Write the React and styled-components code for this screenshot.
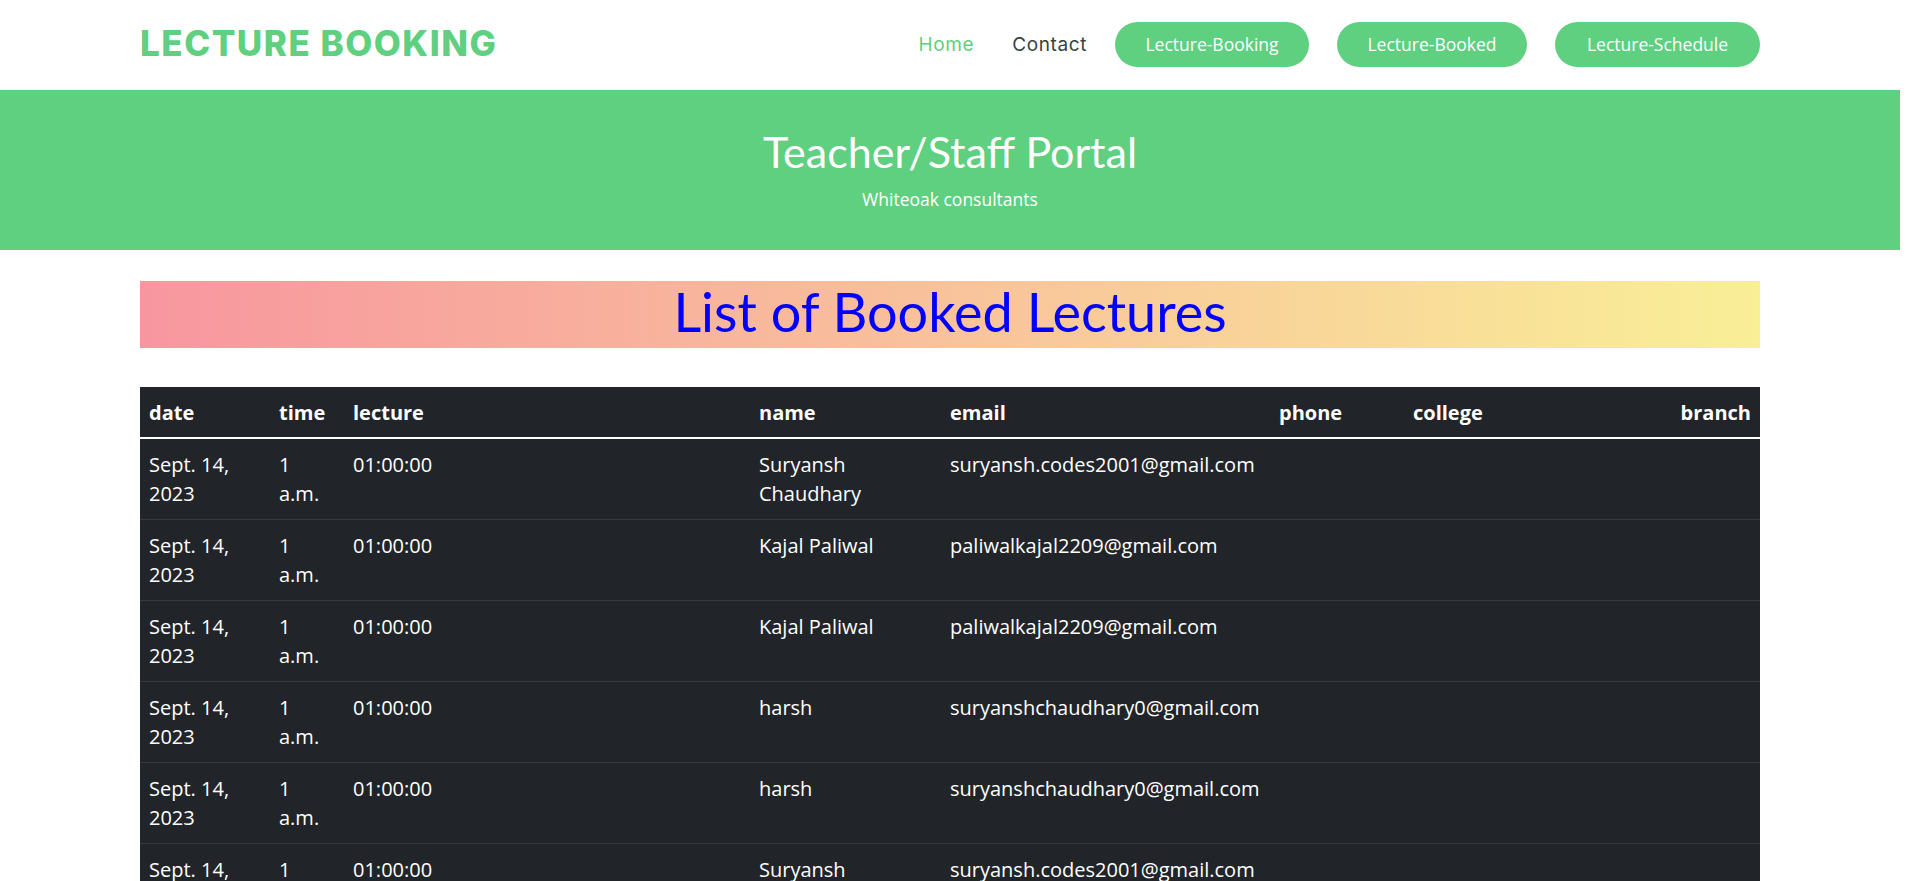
import React from 'react';
import styled, { createGlobalStyle } from 'styled-components';

const GlobalStyle = createGlobalStyle`
  body {
    margin: 0 17px 0 0;
    font-family: 'Open Sans', sans-serif;
    background: #fff;
    color: #212529;
  }
  * { box-sizing: border-box; }
`;

const Header = styled.header`
  height: 90px;
  background: #fff;
`;

const Container = styled.div`
  max-width: 1620px;
  margin: 0 auto;
  height: 100%;
`;

const HeaderInner = styled(Container)`
  display: flex;
  align-items: center;
  justify-content: space-between;
`;

const Logo = styled.div`
  font-family: 'Inter', sans-serif;
  font-weight: 800;
  font-size: 35px;
  letter-spacing: 1.5px;
  color: #5fcf80;
  text-transform: uppercase;
  padding-bottom: 4px;
`;

const Nav = styled.nav`
  display: flex;
  align-items: center;
  gap: 28px;
`;

const NavLink = styled.a`
  font-family: 'Inter', sans-serif;
  font-size: 19px;
  letter-spacing: 0.6px;
  color: ${(p) => (p.$active ? '#5fcf80' : '#37423b')};
  text-decoration: none;
  margin-right: ${(p) => (p.$gap ? '10px' : '0')};
  padding-bottom: 2px;
`;

const NavButton = styled.a`
  display: inline-flex;
  align-items: center;
  justify-content: center;
  height: 45px;
  width: ${(p) => p.$w}px;
  border-radius: 50px;
  background: #5fcf80;
  color: #fff;
  font-family: 'Open Sans', sans-serif;
  font-size: 17.5px;
  text-decoration: none;
  margin-bottom: 2px;
`;

const Hero = styled.section`
  background: #5fcf80;
  height: 160px;
  display: flex;
  flex-direction: column;
  align-items: center;
  color: #fff;
`;

const HeroTitle = styled.h2`
  margin: 38px 0 0;
  font-family: 'Lato', sans-serif;
  font-weight: 400;
  font-size: 43px;
  line-height: 48px;
`;

const HeroSub = styled.p`
  margin: 11px 0 0;
  font-size: 17.5px;
  line-height: 24px;
`;

const Main = styled(Container)`
  padding-top: 31px;
  padding-bottom: 60px;
`;

const Banner = styled.h1`
  margin: 0;
  height: 67px;
  display: flex;
  align-items: center;
  justify-content: center;
  background: linear-gradient(to right, #f8969f, #f9ef97);
  color: #0000ff;
  font-family: 'Lato', sans-serif;
  font-weight: 400;
  font-size: 54px;
  padding-bottom: 6px;
`;

const Table = styled.table`
  margin-top: 39px;
  width: 100%;
  border-collapse: collapse;
  table-layout: fixed;
  background: #212529;
  color: #fff;
  font-size: 20px;
  line-height: 29px;
`;

const Th = styled.th`
  width: ${(p) => (p.$w ? `${p.$w}px` : 'auto')};
  text-align: ${(p) => (p.$right ? 'right' : 'left')};
  padding: 11px 9px 10px;
  font-weight: 700;
  border-bottom: 2px solid #fff;
`;

const Td = styled.td`
  vertical-align: top;
  padding: 11px ${(p) => (p.$pr ? `${p.$pr}px` : '9px')} 11px 9px;
  border-bottom: 1px solid #373b3e;
  font-weight: 400;
`;

const columns = [
  { label: 'date', w: 130 },
  { label: 'time', w: 74 },
  { label: 'lecture', w: 406 },
  { label: 'name', w: 191 },
  { label: 'email', w: 329 },
  { label: 'phone', w: 134 },
  { label: 'college', w: 220 },
  { label: 'branch', right: true },
];

const bookings = [
  { name: 'Suryansh Chaudhary', email: 'suryansh.codes2001@gmail.com' },
  { name: 'Kajal Paliwal', email: 'paliwalkajal2209@gmail.com' },
  { name: 'Kajal Paliwal', email: 'paliwalkajal2209@gmail.com' },
  { name: 'harsh', email: 'suryanshchaudhary0@gmail.com' },
  { name: 'harsh', email: 'suryanshchaudhary0@gmail.com' },
  { name: 'Suryansh Chaudhary', email: 'suryansh.codes2001@gmail.com' },
  { name: 'Kajal Paliwal', email: 'paliwalkajal2209@gmail.com' },
  { name: 'harsh', email: 'suryanshchaudhary0@gmail.com' },
];

const App = () => {
  return (
    <>
      <GlobalStyle />
      <Header>
        <HeaderInner>
          <Logo>Lecture Booking</Logo>
          <Nav>
            <NavLink href="#" $active $gap>Home</NavLink>
            <NavLink href="#">Contact</NavLink>
            <NavButton href="#" $w={194}>Lecture-Booking</NavButton>
            <NavButton href="#" $w={190}>Lecture-Booked</NavButton>
            <NavButton href="#" $w={205}>Lecture-Schedule</NavButton>
          </Nav>
        </HeaderInner>
      </Header>

      <Hero>
        <HeroTitle>Teacher/Staff Portal</HeroTitle>
        <HeroSub>Whiteoak consultants</HeroSub>
      </Hero>

      <Main>
        <Banner>List of Booked Lectures</Banner>
        <Table>
          <thead>
            <tr>
              {columns.map((c) => (
                <Th key={c.label} $w={c.w} $right={c.right}>{c.label}</Th>
              ))}
            </tr>
          </thead>
          <tbody>
            {bookings.map((b, i) => (
              <tr key={i}>
                <Td>Sept. 14, 2023</Td>
                <Td $pr={20}>1 a.m.</Td>
                <Td>01:00:00</Td>
                <Td>{b.name}</Td>
                <Td>{b.email}</Td>
                <Td></Td>
                <Td></Td>
                <Td></Td>
              </tr>
            ))}
          </tbody>
        </Table>
      </Main>
    </>
  );
};

export default App;
